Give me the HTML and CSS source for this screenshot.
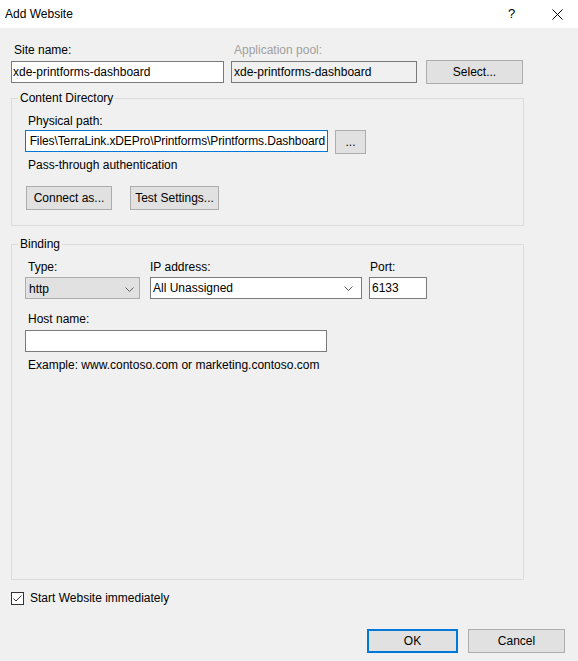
FILE: index.html
```html
<!DOCTYPE html>
<html lang="en">
<head>
    <meta charset="UTF-8">
    <title>Add Website</title>
    <link rel="stylesheet" href="styles.css">
</head>
<body>
    <div class="window">
        <header class="titlebar">
            <span class="title">Add Website</span>
            <span class="caption-btn help">?</span>
            <span class="caption-btn close">
                <svg width="11" height="11" viewBox="0 0 11 11"><path d="M0.5 0.5 L10.5 10.5 M10.5 0.5 L0.5 10.5" stroke="#000" stroke-width="1" fill="none"/></svg>
            </span>
        </header>

        <main class="dialog">
            <!-- Site name / application pool -->
            <div class="site-row">
                <div class="field site-field">
                    <label class="caption">Site name:</label>
                    <div class="textbox">xde-printforms-dashboard</div>
                </div>
                <div class="field pool-field">
                    <label class="caption disabled">Application pool:</label>
                    <div class="textbox readonly">xde-printforms-dashboard</div>
                </div>
                <button class="btn select-btn">Select...</button>
            </div>

            <fieldset class="group content-group">
                <legend>Content Directory</legend>
                <label class="caption indent">Physical path:</label>
                <div class="path-row">
                    <div class="textbox focused path-box"><span>Files\TerraLink.xDEPro\Printforms\Printforms.Dashboard</span></div>
                    <button class="btn browse-btn">...</button>
                </div>
                <p class="note indent auth-note">Pass-through authentication</p>
                <div class="button-row">
                    <button class="btn connect-btn">Connect as...</button>
                    <button class="btn test-btn">Test Settings...</button>
                </div>
            </fieldset>

            <fieldset class="group binding-group">
                <legend>Binding</legend>
                <div class="binding-row">
                    <div class="field type-field">
                        <label class="caption indent">Type:</label>
                        <div class="combo combo-flat">
                            <span>http</span>
                            <svg width="9" height="5" viewBox="0 0 9 5"><path d="M0.5 0.5 L4.5 4.5 L8.5 0.5" stroke="#606060" fill="none"/></svg>
                        </div>
                    </div>
                    <div class="field ip-field">
                        <label class="caption">IP address:</label>
                        <div class="combo">
                            <span>All Unassigned</span>
                            <svg width="9" height="5" viewBox="0 0 9 5"><path d="M0.5 0.5 L4.5 4.5 L8.5 0.5" stroke="#606060" fill="none"/></svg>
                        </div>
                    </div>
                    <div class="field port-field">
                        <label class="caption port-caption">Port:</label>
                        <div class="textbox port-box">6133</div>
                    </div>
                </div>
                <label class="caption indent host-caption">Host name:</label>
                <div class="textbox host-box"></div>
                <p class="note indent example-note">Example: www.contoso.com or marketing.contoso.com</p>
            </fieldset>

            <label class="checkbox-row">
                <span class="checkbox">
                    <svg width="13" height="13" viewBox="0 0 13 13">
                        <rect x="0.5" y="0.5" width="12" height="12" fill="#fff" stroke="#333"/>
                        <path d="M2.5 6.5 L5 9 L10.5 3.5" stroke="#333" fill="none"/>
                    </svg>
                </span>
                Start Website immediately
            </label>

            <div class="actions">
                <button class="btn default-btn ok-btn">OK</button>
                <button class="btn cancel-btn">Cancel</button>
            </div>
        </main>
    </div>
</body>
</html>
```

FILE: styles.css
```css
/* Classic Windows dialog look */
* {
    box-sizing: border-box;
    margin: 0;
    padding: 0;
}

body {
    width: 578px;
    height: 661px;
    overflow: hidden;
    font-family: "Liberation Sans", Arial, sans-serif;
    font-size: 12px;
    line-height: 16px;
    color: #000;
    background: #f0f0f0;
}

.window {
    display: flex;
    flex-direction: column;
    height: 661px;
}

/* Title bar */
.titlebar {
    height: 28px;
    flex: none;
    display: flex;
    align-items: center;
    padding-left: 5px;
    background: #fff;
}

.titlebar .title {
    flex: 1;
}

.caption-btn {
    height: 28px;
    display: flex;
    align-items: center;
    justify-content: center;
}

.help {
    width: 45px;
    font-size: 13px;
}

.close {
    width: 44px;
    padding-left: 2px;
}

/* Dialog body */
.dialog {
    flex: 1;
    display: flex;
    flex-direction: column;
    padding: 14px 0 8px 11px;
}

.field {
    display: flex;
    flex-direction: column;
}

.caption {
    display: block;
    height: 16px;
}

.caption.disabled {
    color: #a0a0a0;
}

.indent {
    padding-left: 3px;
}

.textbox {
    height: 22px;
    display: flex;
    align-items: center;
    padding-left: 1px;
    background: #fff;
    border: 1px solid #7a7a7a;
    white-space: nowrap;
    overflow: hidden;
}

.textbox.readonly {
    background: #f0f0f0;
    padding-left: 2px;
}

.textbox.focused {
    border-color: #0078d7;
}

.btn {
    height: 24px;
    font: inherit;
    color: #000;
    background: #e1e1e1;
    border: 1px solid #adadad;
    text-align: center;
}

.btn.default-btn {
    border: 2px solid #0078d7;
}

/* Top row */
.site-row {
    display: flex;
    align-items: flex-end;
}

.site-row .caption {
    padding-left: 3px;
    margin-bottom: 3px;
}

.site-field {
    width: 213px;
}

.pool-field {
    width: 186px;
    margin-left: 7px;
}

.select-btn {
    width: 97px;
    margin-left: 9px;
    margin-bottom: -1px;
}

/* Group boxes */
.group {
    width: 513px;
    border: 1px solid #dcdcdc;
    padding: 7px 0 15px 13px;
    min-width: 0;
}

.group legend {
    margin-left: -7px;
    padding: 0 2px;
    line-height: 16px;
}

.content-group {
    margin-top: 7px;
}

.path-row {
    display: flex;
    align-items: flex-start;
    gap: 7px;
    margin-top: 1px;
}

.path-box {
    width: 303px;
    justify-content: flex-end;
    padding: 0 2px;
    letter-spacing: -0.1px;
}

.browse-btn {
    width: 31px;
}

.auth-note {
    margin-top: 3px;
}

.button-row {
    display: flex;
    gap: 18px;
    margin-top: 13px;
    padding-left: 1px;
}

.connect-btn {
    width: 86px;
}

.test-btn {
    width: 89px;
}

.binding-group {
    flex: 1;
    margin-top: 10px;
}

.binding-row {
    display: flex;
}

.binding-row .caption {
    margin-bottom: 2px;
}

.type-field {
    width: 115px;
}

.ip-field {
    width: 212px;
    margin-left: 10px;
}

.port-field {
    width: 58px;
    margin-left: 7px;
}

.port-caption {
    padding-left: 1px;
}

.combo {
    height: 22px;
    display: flex;
    align-items: center;
    justify-content: space-between;
    padding: 0 8px 0 2px;
    background: #fff;
    border: 1px solid #7a7a7a;
}

.combo svg {
    display: block;
}

.combo-flat {
    background: #e1e1e1;
    border-color: #adadad;
    padding: 2px 5px 0 3px;
}

.port-box {
    padding-left: 2px;
}

.host-caption {
    margin-top: 12px;
    margin-bottom: 3px;
}

.host-box {
    width: 302px;
}

.example-note {
    margin-top: 5px;
}

/* Footer */
.checkbox-row {
    display: flex;
    align-items: center;
    gap: 6px;
    height: 16px;
    margin-top: 10px;
}

.checkbox svg {
    display: block;
}

.actions {
    display: flex;
    justify-content: flex-end;
    gap: 10px;
    margin-top: 23px;
    padding-right: 13px;
}

.ok-btn {
    width: 91px;
}

.cancel-btn {
    width: 97px;
}
```
